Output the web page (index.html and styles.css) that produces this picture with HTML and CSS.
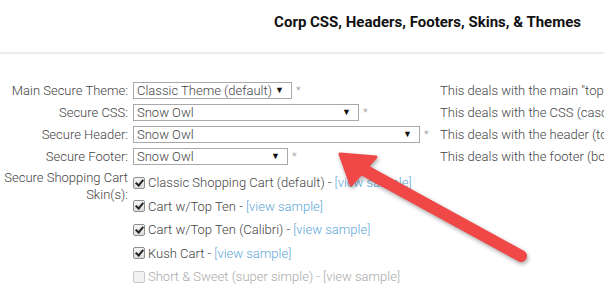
FILE: index.html
```html
<!DOCTYPE html>
<html lang="en">

<head>
    <meta charset="utf-8">
    <title>Corp CSS, Headers, Footers, Skins, &amp; Themes</title>
    <link rel="stylesheet" href="styles.css">
</head>

<body>

    <div class="kopf">
        <h1>Corp CSS, Headers, Footers, Skins, &amp; Themes</h1>
    </div>

    <div class="felder">

        <div class="label">Main Secure Theme:</div>
        <div class="feld">
            <div class="sel w-main"><span>Classic Theme (default)</span><i>&#9660;</i></div>
            <span class="stern">*</span>
        </div>
        <div class="info">This deals with the main "top_level" theme of the whole secure site.</div>

        <div class="label">Secure CSS:</div>
        <div class="feld">
            <div class="sel w-css"><span>Snow Owl</span><i>&#9660;</i></div>
            <span class="stern">*</span>
        </div>
        <div class="info">This deals with the CSS (cascading style sheets) of the site.</div>

        <div class="label">Secure Header:</div>
        <div class="feld">
            <div class="sel w-head"><span>Snow Owl</span><i>&#9660;</i></div>
            <span class="stern">*</span>
        </div>
        <div class="info">This deals with the header (top of each page).</div>

        <div class="label">Secure Footer:</div>
        <div class="feld">
            <div class="sel w-foot"><span>Snow Owl</span><i>&#9660;</i></div>
            <span class="stern">*</span>
        </div>
        <div class="info">This deals with the footer (bottom of each page).</div>

        <div class="label hoch">Secure Shopping Cart Skin(s):</div>
        <div class="liste">
            <div class="cb"><span class="box an"></span>Classic Shopping Cart (default) - <a href="#">[view sample]</a></div>
            <div class="cb"><span class="box an"></span>Cart w/Top Ten - <a href="#">[view sample]</a></div>
            <div class="cb"><span class="box an"></span>Cart w/Top Ten (Calibri) - <a href="#">[view sample]</a></div>
            <div class="cb"><span class="box an"></span>Kush Cart - <a href="#">[view sample]</a></div>
            <div class="cb aus"><span class="box"></span>Short &amp; Sweet (super simple) - <a href="#">[view sample]</a></div>
        </div>

    </div>

    <!-- roter pfeil oben drauf -->
    <svg class="pfeil" width="604" height="291" viewBox="0 0 604 291">
        <line x1="521" y1="256" x2="364" y2="170" stroke="#f04747" stroke-width="12" stroke-linecap="round" />
        <polygon points="340,154 376,157 351,185" fill="#f04747" stroke="#f04747" stroke-width="3" stroke-linejoin="round" />
    </svg>

</body>

</html>
```

FILE: styles.css
```css
body {
    margin: 0;
    width: 604px;
    height: 291px;
    overflow: hidden;
    position: relative;
    background: #fff;
    font-family: Roboto, "Liberation Sans", sans-serif;
    font-size: 13px;
    font-weight: 300;
    color: #444;
}

.kopf {
    height: 52px;
    border-bottom: 2px solid #ececec;
    display: flex;
    justify-content: flex-end;
}

h1 {
    margin: 13px 23px 0 0;
    font-size: 15px;
    font-weight: bold;
    color: #111;
    letter-spacing: 0;
}

.felder {
    display: grid;
    grid-template-columns: 128px 307px 1fr;
    grid-auto-rows: 22px;
    column-gap: 5px;
    padding-top: 25px;
    white-space: nowrap;
}

.label {
    text-align: right;
    display: flex;
    align-items: center;
    justify-content: flex-end;
}

.label.hoch {
    white-space: normal;
    align-items: flex-start;
    line-height: 17px;
    padding-top: 2px;
    grid-row: span 5;
}

.feld {
    display: flex;
    align-items: center;
}

.info {
    display: flex;
    align-items: center;
    margin-left: -5px;
    overflow: hidden;
}

.sel {
    box-sizing: border-box;
    height: 17px;
    border: 1px solid #a9a9a9;
    display: flex;
    align-items: center;
    justify-content: space-between;
    padding: 0 7px 0 3px;
    background: #fff;
}

.sel i {
    font-style: normal;
    font-size: 9px;
    color: #111;
}

.w-main { width: 159px; }
.w-css { width: 226px; }
.w-head { width: 287px; }
.w-foot { width: 155px; }

.stern {
    margin-left: 4px;
    color: #999;
    font-size: 11px;
}

.liste {
    grid-column: 2 / 4;
    grid-row: span 5;
    padding-top: 4px;
}

.cb {
    height: 23.5px;
    display: flex;
    align-items: center;
}

.cb a {
    color: #5ea7d8;
    text-decoration: none;
    margin-left: 3px;
}

.box {
    box-sizing: border-box;
    width: 12px;
    height: 12px;
    margin-right: 3px;
    border: 1px solid #8f8f8f;
    border-radius: 2px;
    background: linear-gradient(#f4f4f4, #dcdcdc);
    position: relative;
}

.box.an::after {
    content: "";
    position: absolute;
    left: 3px;
    top: 0px;
    width: 3px;
    height: 6px;
    border: solid #222;
    border-width: 0 2px 2px 0;
    transform: rotate(40deg);
}

.aus {
    color: #aaa;
}

.aus .box {
    border-color: #c8c8c8;
    background: #f2f2f2;
}

.aus a {
    color: #aaa;
}

.pfeil {
    position: absolute;
    left: 0;
    top: 0;
    filter: drop-shadow(1px 2px 2px rgba(0, 0, 0, 0.35));
}
```
